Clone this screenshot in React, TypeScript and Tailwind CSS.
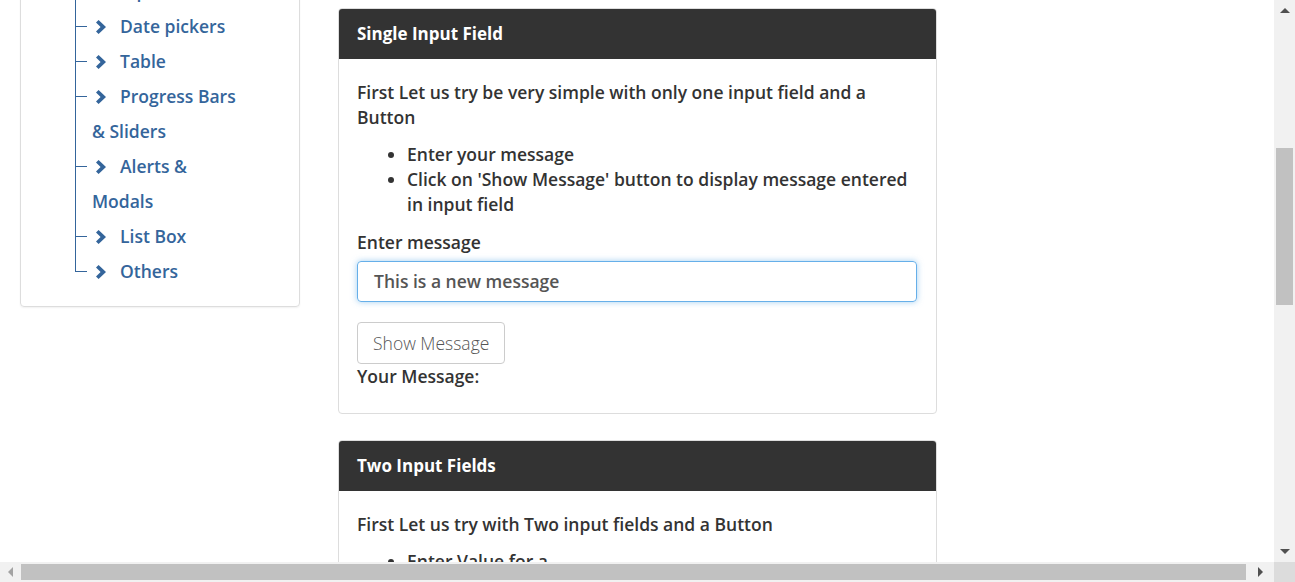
import React from "react";

const BLUE = "#34659b";

function Chevron() {
  return (
    <svg width="10" height="14" viewBox="0 0 10 14" className="inline-block align-[-1px]">
      <polygon points="0,2.6 2.6,0 10,7 2.6,14 0,11.4 4.6,7" fill={BLUE} />
    </svg>
  );
}

function TreeRow({ lines, last }: { lines: string[]; last?: boolean }) {
  return (
    <div className="flex">
      <div className="relative w-[17px] shrink-0">
        {last ? (
          <div className="h-[18px] w-[12px] border-l border-b border-[#34659b]" />
        ) : (
          <div className="h-full border-l border-[#34659b]">
            <div className="mt-[17px] w-[11px] h-px bg-[#34659b]" />
          </div>
        )}
      </div>
      <div className="leading-[35px] text-[17.5px] font-semibold text-[#34659b] whitespace-nowrap">
        <span className="inline-block w-[28px] pl-[4px]">
          <Chevron />
        </span>
        {lines[0]}
        {lines.slice(1).map((l, i) => (
          <div key={i}>{l}</div>
        ))}
      </div>
    </div>
  );
}

function Sidebar() {
  return (
    <div className="w-[280px] mt-[-40px] border border-[#dddddd] rounded-[4px] shadow-[0_1px_2px_rgba(0,0,0,0.06)] pt-[13px] pb-[17px] pl-[54px]">
      <TreeRow lines={["Input Forms"]} />
      <TreeRow lines={["Date pickers"]} />
      <TreeRow lines={["Table"]} />
      <TreeRow lines={["Progress Bars", "& Sliders"]} />
      <TreeRow lines={["Alerts &", "Modals"]} />
      <TreeRow lines={["List Box"]} />
      <TreeRow lines={["Others"]} last />
    </div>
  );
}

function Card({ title, children }: { title: string; children: React.ReactNode }) {
  return (
    <div className="w-[599px] border border-[#dddddd] rounded-[4px] overflow-hidden bg-white">
      <div className="h-[50px] bg-[#333333] flex items-center pl-[18px] text-white text-[17px] font-bold">
        {title}
      </div>
      <div className="pt-[21px] pl-[18px] pr-[19px] pb-[24px] text-[17.5px] leading-[25px] font-semibold text-[#333333]">
        {children}
      </div>
    </div>
  );
}

function VScroll() {
  return (
    <div className="w-[21px] bg-[#f1f1f1] flex flex-col items-center shrink-0">
      <div className="h-[20px] flex items-center justify-center">
        <div className="w-0 h-0 border-l-[5px] border-r-[5px] border-b-[5px] border-l-transparent border-r-transparent border-b-[#505050]" />
      </div>
      <div className="flex-1 w-full px-[2px]">
        <div className="mt-[128px] h-[157px] bg-[#c1c1c1]" />
      </div>
      <div className="h-[22px] flex items-center justify-center">
        <div className="w-0 h-0 border-l-[5px] border-r-[5px] border-t-[5px] border-l-transparent border-r-transparent border-t-[#505050]" />
      </div>
    </div>
  );
}

function HScroll() {
  return (
    <div className="h-[20px] flex shrink-0">
      <div className="flex-1 bg-[#f1f1f1] flex items-center">
        <div className="w-[21px] flex justify-center">
          <div className="w-0 h-0 border-t-[5px] border-b-[5px] border-r-[5px] border-t-transparent border-b-transparent border-r-[#a3a3a3]" />
        </div>
        <div className="w-[1225px] h-[16px] bg-[#c1c1c1]" />
        <div className="flex-1 flex justify-center">
          <div className="w-0 h-0 border-t-[5px] border-b-[5px] border-l-[5px] border-t-transparent border-b-transparent border-l-[#505050]" />
        </div>
      </div>
      <div className="w-[21px] bg-[#dcdcdc]" />
    </div>
  );
}

export default function App() {
  return (
    <div
      className="w-[1295px] h-[582px] flex flex-col overflow-hidden bg-white"
      style={{ fontFamily: "'Open Sans', Lato, sans-serif" }}
    >
      <div className="flex flex-1 min-h-0">
        <div className="flex-1 overflow-hidden">
          <div className="flex items-start pl-[20px] gap-[38px]">
            <Sidebar />
            <div className="pt-[8px] flex flex-col gap-[26px]">
              <Card title="Single Input Field">
                <p className="mb-[12px]">
                  First Let us try be very simple with only one input field and a
                  <br />
                  Button
                </p>
                <ul className="list-disc pl-[50px] mb-[13px]">
                  <li>Enter your message</li>
                  <li>
                    Click on 'Show Message' button to display message entered
                    <br />
                    in input field
                  </li>
                </ul>
                <div className="mb-[6px]">Enter message</div>
                <div className="h-[41px] w-full border border-[#66afe9] rounded-[4px] shadow-[0_0_6px_rgba(102,175,233,0.6)] flex items-center pl-[16px] text-[#555555] font-semibold">
                  This is a new message
                </div>
                <div className="mt-[20px] h-[42px] self-start inline-flex border border-[#cccccc] rounded-[4px] items-center px-[15px] text-[#555555] font-light">
                  Show Message
                </div>
                <div>Your Message:</div>
              </Card>
              <Card title="Two Input Fields">
                <p className="mb-[12px]">First Let us try with Two input fields and a Button</p>
                <ul className="list-disc pl-[50px]">
                  <li>Enter Value for a</li>
                  <li>Enter Value for b</li>
                </ul>
              </Card>
            </div>
          </div>
        </div>
        <VScroll />
      </div>
      <HScroll />
    </div>
  );
}
